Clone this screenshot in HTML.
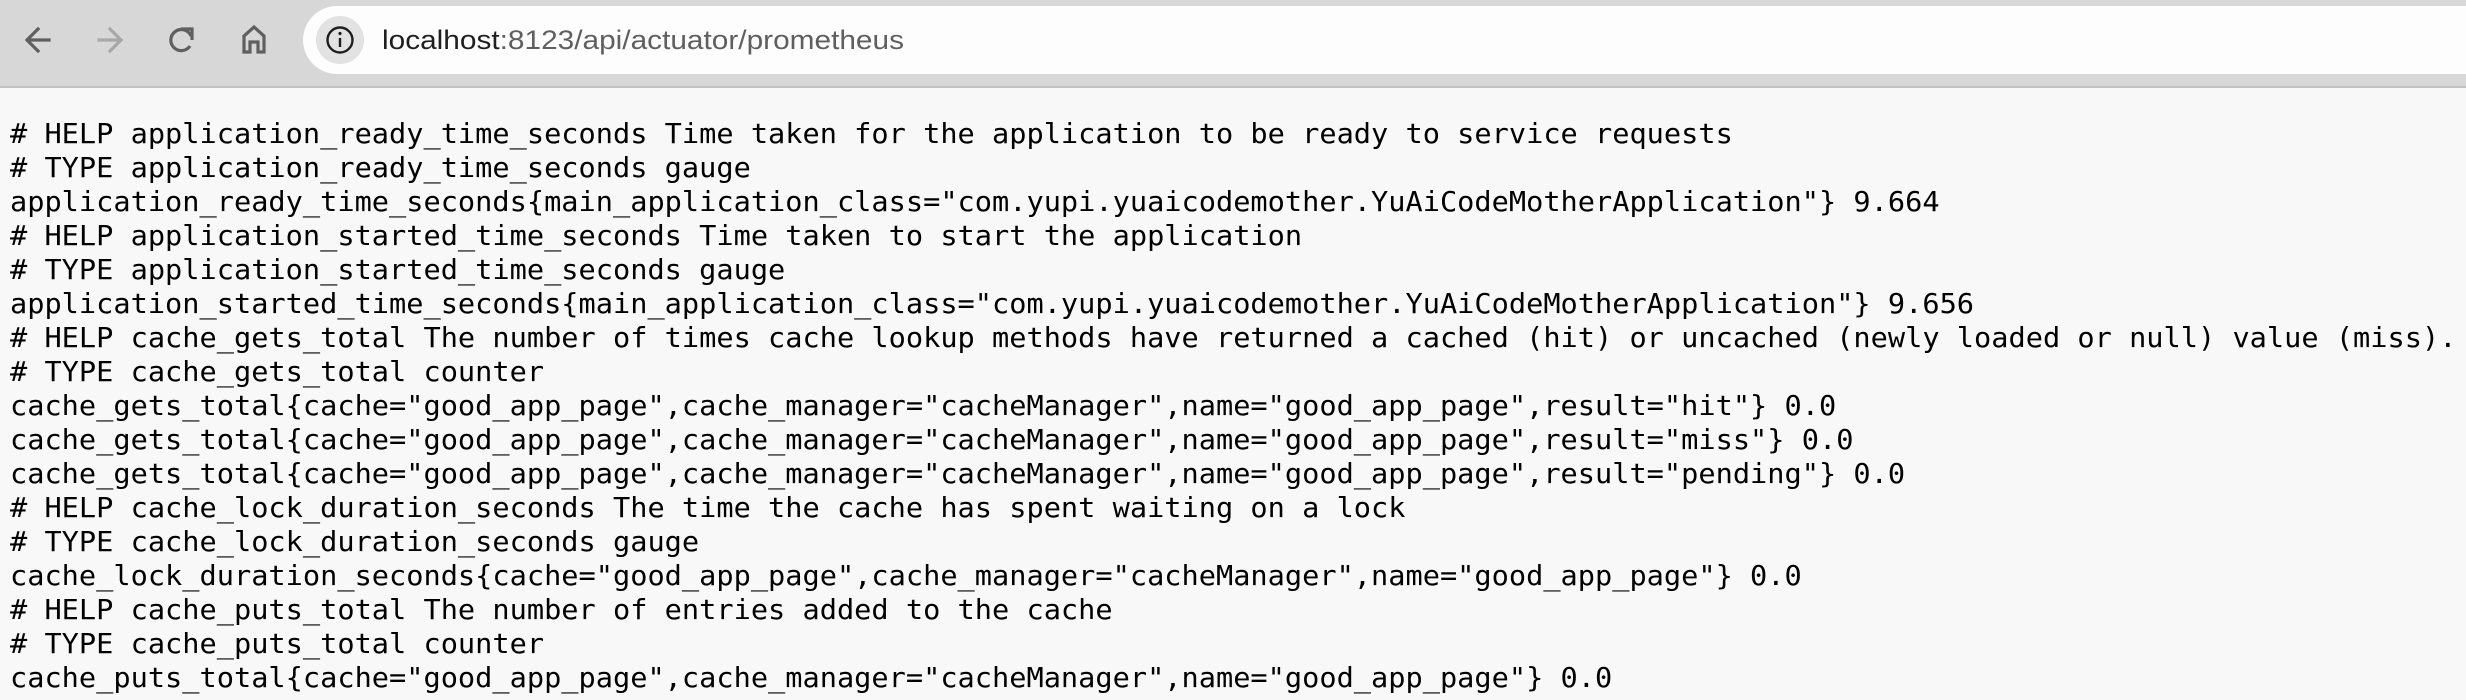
<!DOCTYPE html>
<html><head><meta charset="utf-8"><style>
html,body{margin:0;padding:0;width:2466px;height:700px;overflow:hidden;background:#f8f8f8;}
.bar{position:absolute;left:0;top:0;width:2466px;height:86px;background:#d7d7d7;border-bottom:2px solid #c3c3c3;}
.url{position:absolute;left:303px;top:6px;width:2200px;height:68px;background:#fdfdfd;border-radius:34px;}
pre{position:absolute;left:10px;top:117px;margin:0;font-family:"DejaVu Sans Mono","Liberation Mono",monospace;font-size:28px;line-height:34px;color:#000;white-space:pre;transform:scaleX(1.022);transform-origin:0 0;}
</style></head><body>
<div class="bar"></div>
<div class="url"></div>
<svg width="2466" height="86" style="position:absolute;left:0;top:0">
 <g fill="none" stroke="#5f5f5f" stroke-width="3.2" stroke-linecap="square">
  <path d="M49 40H28M38 29L27 40L38 51"/>
 </g>
 <g fill="none" stroke="#a8a8a8" stroke-width="3.2" stroke-linecap="square">
  <path d="M99 40H120M110 29L121 40L110 51"/>
 </g>
 <g fill="none" stroke="#5f5f5f" stroke-width="3.2">
  <path d="M191 36A10.5 10.5 0 1 0 190 46"/>
  <path d="M181 29H192V40" stroke-linejoin="miter"/>
  <path d="M244 52V36L254 27L264 36V52H258V42H250V52Z" stroke-linejoin="miter"/>
 </g>
 <circle cx="340" cy="40" r="24" fill="#e2e2e2"/>
 <circle cx="340" cy="40" r="12.5" fill="none" stroke="#1f1f1f" stroke-width="2.4"/>
 <rect x="338.8" y="38" width="2.4" height="9" fill="#1f1f1f"/>
 <circle cx="340" cy="33.5" r="1.6" fill="#1f1f1f"/>
 <text x="382" y="49" font-family="Liberation Sans, Arial, sans-serif" font-size="27" textLength="522" lengthAdjust="spacingAndGlyphs"><tspan fill="#1f1f1f">localhost</tspan><tspan fill="#5f5f5f">:8123/api/actuator/prometheus</tspan></text>
</svg>
<pre># HELP application_ready_time_seconds Time taken for the application to be ready to service requests
# TYPE application_ready_time_seconds gauge
application_ready_time_seconds{main_application_class="com.yupi.yuaicodemother.YuAiCodeMotherApplication"} 9.664
# HELP application_started_time_seconds Time taken to start the application
# TYPE application_started_time_seconds gauge
application_started_time_seconds{main_application_class="com.yupi.yuaicodemother.YuAiCodeMotherApplication"} 9.656
# HELP cache_gets_total The number of times cache lookup methods have returned a cached (hit) or uncached (newly loaded or null) value (miss).
# TYPE cache_gets_total counter
cache_gets_total{cache="good_app_page",cache_manager="cacheManager",name="good_app_page",result="hit"} 0.0
cache_gets_total{cache="good_app_page",cache_manager="cacheManager",name="good_app_page",result="miss"} 0.0
cache_gets_total{cache="good_app_page",cache_manager="cacheManager",name="good_app_page",result="pending"} 0.0
# HELP cache_lock_duration_seconds The time the cache has spent waiting on a lock
# TYPE cache_lock_duration_seconds gauge
cache_lock_duration_seconds{cache="good_app_page",cache_manager="cacheManager",name="good_app_page"} 0.0
# HELP cache_puts_total The number of entries added to the cache
# TYPE cache_puts_total counter
cache_puts_total{cache="good_app_page",cache_manager="cacheManager",name="good_app_page"} 0.0</pre>
</body></html>
